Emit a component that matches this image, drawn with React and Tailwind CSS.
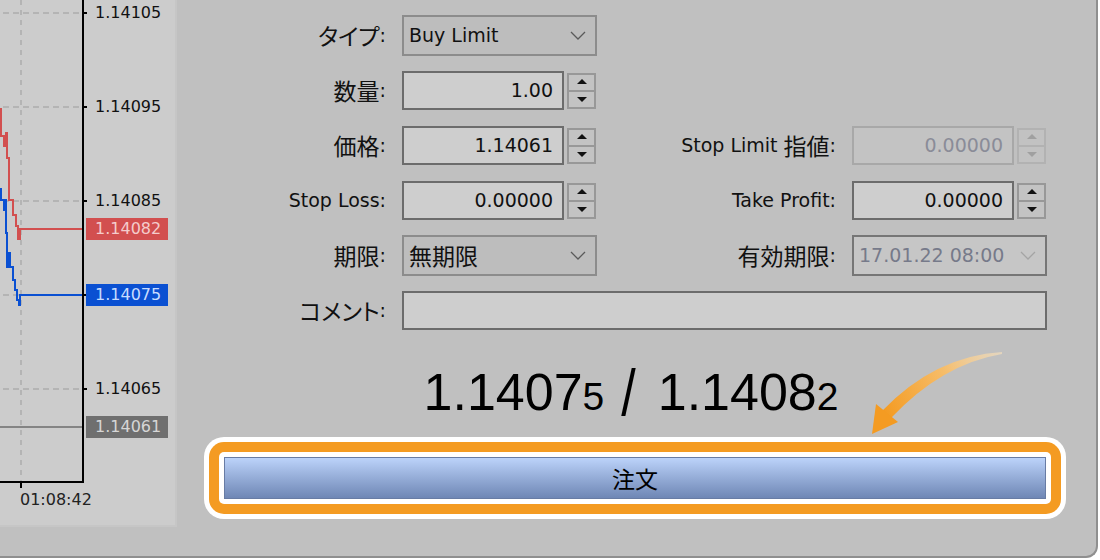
const DV = "[font-family:'DejaVu_Sans','Noto_Sans_CJK_JP',sans-serif]";

function J({ children }) {
  return (
    <span className="text-[23px] [font-family:'Noto_Sans_CJK_JP',sans-serif] [font-feature-settings:'palt']">
      {children}
    </span>
  );
}

function Label({ children }) {
  return (
    <div className="flex h-full items-center justify-end whitespace-nowrap text-[19px] leading-none text-[#111]">
      {children}
    </div>
  );
}

function Spinner({ disabled }) {
  const c = disabled ? '#a0a0a0' : '#111';
  return (
    <div
      className={`flex h-[36px] w-[29px] flex-col border-2 ${
        disabled ? 'border-[#b2b2b2] bg-[#c2c2c2]' : 'border-[#989898] bg-[#c3c3c3]'
      }`}
    >
      <div className="flex flex-1 items-center justify-center">
        <svg width="10" height="6" viewBox="0 0 10 6">
          <path d="M5 0 L10 5 L0 5 Z" fill={c} />
        </svg>
      </div>
      <div className={`h-[2px] ${disabled ? 'bg-[#b2b2b2]' : 'bg-[#989898]'}`} />
      <div className="flex flex-1 items-center justify-center">
        <svg width="10" height="6" viewBox="0 0 10 6">
          <path d="M0 1 L10 1 L5 6 Z" fill={c} />
        </svg>
      </div>
    </div>
  );
}

function NumField({ value, disabled }) {
  return (
    <div className="flex h-full items-center gap-[3px]">
      <div
        className={`flex h-[39px] w-[162px] items-center justify-end border-2 pr-[9px] text-[19px] ${
          disabled
            ? 'border-[#a8a8a8] bg-[#c3c3c3] text-[#8a8c98]'
            : 'border-[#6c6c6c] bg-[#cecece] text-[#111]'
        }`}
      >
        {value}
      </div>
      <Spinner disabled={disabled} />
    </div>
  );
}

function Select({ children, disabled }) {
  return (
    <div className="flex h-full items-center">
      <div
        className={`flex h-[41px] w-[195px] items-center justify-between border-2 pl-[5px] pr-[9px] text-[19px] ${
          disabled
            ? 'border-[#767676] bg-[#c6c6c6] text-[#767a8a]'
            : 'border-[#8c8c8c] bg-[#bdbdbd] text-[#111]'
        }`}
      >
        <span className="whitespace-nowrap">{children}</span>
        <svg width="16" height="9" viewBox="0 0 16 9">
          <path d="M1 1 L8 8 L15 1" fill="none" stroke={disabled ? '#a4a4a4' : '#5a5a5a'} strokeWidth="1.3" />
        </svg>
      </div>
    </div>
  );
}

function Chart() {
  const grid = [13, 107, 201, 295, 389];
  const ticks = [
    [13, '1.14105'],
    [107, '1.14095'],
    [201, '1.14085'],
    [389, '1.14065'],
  ];
  const boxes = [
    [229, '1.14082', 'bg-[#d24f4f] text-[#f4cccc]'],
    [295, '1.14075', 'bg-[#0a50d2] text-[#c8dcff]'],
    [427, '1.14061', 'bg-[#6f6f6f] text-[#d6d6d6]'],
  ];
  return (
    <div className="relative h-[527px] w-[177px] shrink-0 border-r-2 border-b-2 border-[#c6c6c6] bg-[#cccccc]">
      <svg className="absolute left-0 top-0" width="175" height="525">
        {grid.map((y) => (
          <line key={y} x1="0" x2="82" y1={y} y2={y} stroke="#b4b4b4" strokeWidth="2" strokeDasharray="6 4" strokeDashoffset="-3" />
        ))}
        <line x1="21" x2="21" y1="0" y2="482" stroke="#b4b4b4" strokeWidth="2" strokeDasharray="5 5" />
        {grid.map((y) => (
          <line key={'t' + y} x1="83" x2="87" y1={y} y2={y} stroke="#000" strokeWidth="2" />
        ))}
        <line x1="0" x2="83" y1="427" y2="427" stroke="#6c6c6c" strokeWidth="1.5" />
        <polyline
          fill="none"
          stroke="#d24f4f"
          strokeWidth="2"
          points="1,108 1,136 4,136 4,146 6,146 6,133 7,133 7,158 9,158 9,200 13,200 13,215 16,215 16,226 18,226 18,239 20,239 20,229 83,229"
        />
        <polyline
          fill="none"
          stroke="#0a50d2"
          strokeWidth="2"
          points="1,188 1,200 4,200 4,210 5,210 5,200 6,200 6,233 7,233 7,267 9,267 9,253 10,253 10,267 13,267 13,280 15,280 15,290 17,290 17,300 19,300 19,305 20,305 20,295 83,295"
        />
        <line x1="83" x2="83" y1="0" y2="483" stroke="#000" strokeWidth="2" />
        <line x1="0" x2="84" y1="482" y2="482" stroke="#000" strokeWidth="2" />
        <line x1="21" x2="21" y1="483" y2="488" stroke="#000" strokeWidth="2" />
      </svg>
      {ticks.map(([y, t]) => (
        <div key={t} className={`absolute left-[95px] h-[20px] text-[16px] leading-[20px] text-[#111] ${DV}`} style={{ top: y - 10 }}>
          {t}
        </div>
      ))}
      {boxes.map(([y, t, cls]) => (
        <div
          key={t}
          className={`absolute left-[86px] h-[22px] w-[82px] pl-[9px] text-[16px] leading-[22px] ${DV} ${cls}`}
          style={{ top: y - 11 }}
        >
          {t}
        </div>
      ))}
      <div className={`absolute left-[20px] top-[490px] text-[16px] leading-[20px] text-[#222] ${DV}`}>01:08:42</div>
    </div>
  );
}

export default function App() {
  return (
    <div className={`relative h-[560px] w-[1100px] overflow-hidden bg-white ${DV}`}>
      <div className="flex h-[558px] w-[1098px] rounded-br-[12px] border-r-2 border-b-2 border-[#8f8f8f] bg-[#c0c0c0]">
        <Chart />
        <div className="flex flex-1 flex-col">
          <div className="grid grid-cols-[209px_195px_223px_195px] grid-rows-[repeat(6,55px)] gap-x-4 pt-2">
            <Label>
              <J>タイプ</J>:
            </Label>
            <Select>Buy Limit</Select>
            <div />
            <div />

            <Label>
              <J>数量</J>:
            </Label>
            <NumField value="1.00" />
            <div />
            <div />

            <Label>
              <J>価格</J>:
            </Label>
            <NumField value="1.14061" />
            <Label>
              Stop Limit&nbsp;<J>指値</J>:
            </Label>
            <NumField value="0.00000" disabled />

            <Label>Stop Loss:</Label>
            <NumField value="0.00000" />
            <Label>Take Profit:</Label>
            <NumField value="0.00000" />

            <Label>
              <J>期限</J>:
            </Label>
            <Select>
              <J>無期限</J>
            </Select>
            <Label>
              <J>有効期限</J>:
            </Label>
            <Select disabled>17.01.22 08:00</Select>

            <Label>
              <J>コメント</J>:
            </Label>
            <div className="col-span-3 flex h-full items-center">
              <div className="h-[39px] w-full border-2 border-[#6c6c6c] bg-[#cecece]" />
            </div>
          </div>

          <div className="mt-[28px] flex h-[52px] items-baseline justify-center pr-[11px] text-[52px] leading-none text-black [font-family:'Liberation_Sans',sans-serif]">
            <span>1.1407</span>
            <span className="text-[39px]">5</span>
            <span className="ml-[17px] mr-[22px] inline-block scale-y-125">/</span>
            <span>1.1408</span>
            <span className="text-[39px]">2</span>
          </div>

          <div className="ml-[27px] mt-[19px] w-[862px] rounded-[20px] bg-white p-[5px]">
            <div className="rounded-[15px] bg-[#f49b22] p-[10px]">
              <div className="rounded-[5px] bg-white p-[5px]">
                <div className="flex h-[42px] w-full items-center justify-center border border-[#687ca4] bg-linear-to-b from-[#bcd3fa] to-[#6f87b5] text-black">
                  <J>注文</J>
                </div>
              </div>
            </div>
          </div>
        </div>
      </div>

      <svg className="pointer-events-none absolute left-0 top-0" width="1100" height="560">
        <defs>
          <linearGradient id="tail" x1="1002" y1="353" x2="885" y2="414" gradientUnits="userSpaceOnUse">
            <stop offset="0" stopColor="#fbe3bd" stopOpacity="0.6" />
            <stop offset="0.45" stopColor="#f6bd6a" />
            <stop offset="1" stopColor="#f49b22" />
          </linearGradient>
        </defs>
        <path d="M1002 352 Q935 356 882 411 L891 418 Q942 364 1002 354 Z" fill="url(#tail)" />
        <path d="M872 434 L876 404 L898 422 Z" fill="#f49b22" />
      </svg>
    </div>
  );
}
